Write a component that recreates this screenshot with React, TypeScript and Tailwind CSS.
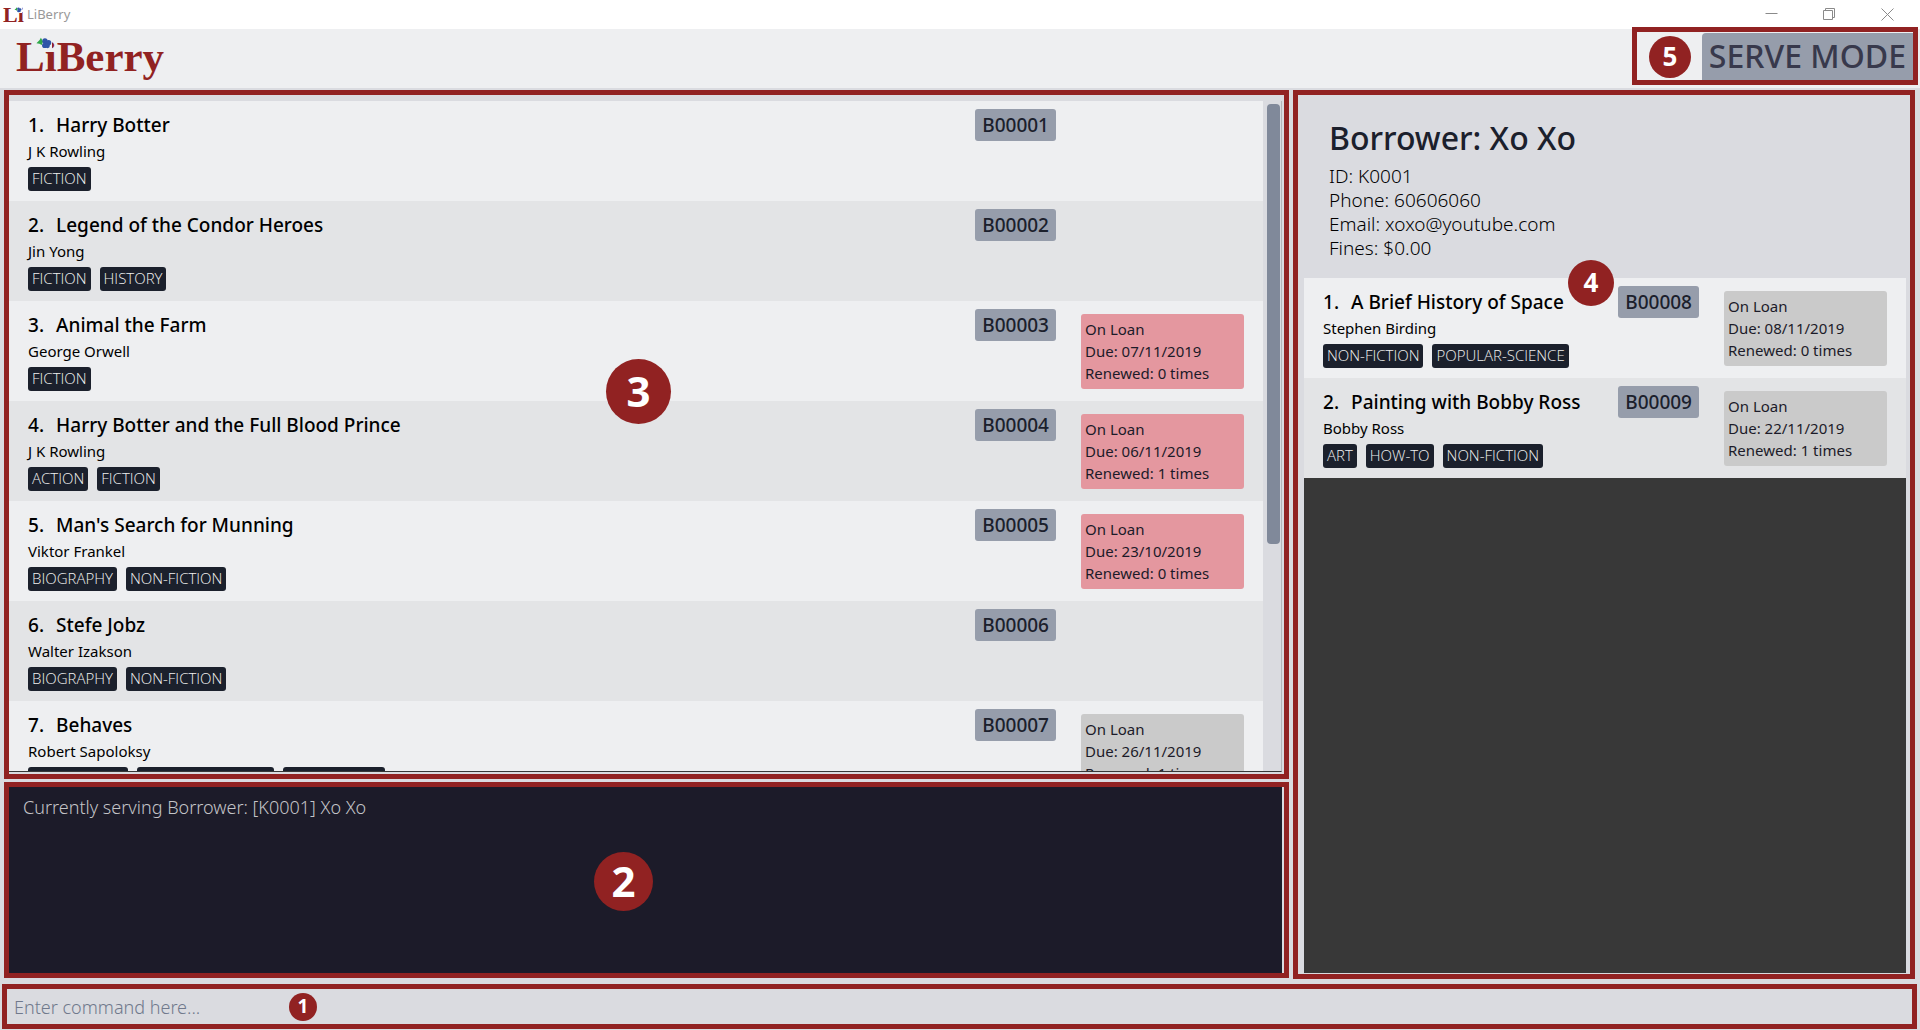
import type { ReactNode } from 'react';

type Loan = { due: string; renewed: number; overdue?: boolean };
type Book = { title: string; author: string; tags: string[]; code: string; loan?: Loan };

const catalogue: Book[] = [
  { title: 'Harry Botter', author: 'J K Rowling', tags: ['FICTION'], code: 'B00001' },
  { title: 'Legend of the Condor Heroes', author: 'Jin Yong', tags: ['FICTION', 'HISTORY'], code: 'B00002' },
  {
    title: 'Animal the Farm',
    author: 'George Orwell',
    tags: ['FICTION'],
    code: 'B00003',
    loan: { due: '07/11/2019', renewed: 0, overdue: true },
  },
  {
    title: 'Harry Botter and the Full Blood Prince',
    author: 'J K Rowling',
    tags: ['ACTION', 'FICTION'],
    code: 'B00004',
    loan: { due: '06/11/2019', renewed: 1, overdue: true },
  },
  {
    title: "Man's Search for Munning",
    author: 'Viktor Frankel',
    tags: ['BIOGRAPHY', 'NON-FICTION'],
    code: 'B00005',
    loan: { due: '23/10/2019', renewed: 0, overdue: true },
  },
  { title: 'Stefe Jobz', author: 'Walter Izakson', tags: ['BIOGRAPHY', 'NON-FICTION'], code: 'B00006' },
  {
    title: 'Behaves',
    author: 'Robert Sapoloksy',
    tags: ['NON-FICTION', 'POPULAR-SCIENCE', 'PSYCHOLOGY'],
    code: 'B00007',
    loan: { due: '26/11/2019', renewed: 1 },
  },
];

const borrowed: Book[] = [
  {
    title: 'A Brief History of Space',
    author: 'Stephen Birding',
    tags: ['NON-FICTION', 'POPULAR-SCIENCE'],
    code: 'B00008',
    loan: { due: '08/11/2019', renewed: 0 },
  },
  {
    title: 'Painting with Bobby Ross',
    author: 'Bobby Ross',
    tags: ['ART', 'HOW-TO', 'NON-FICTION'],
    code: 'B00009',
    loan: { due: '22/11/2019', renewed: 1 },
  },
];

function Marker({ className, children }: { className: string; children: ReactNode }) {
  return (
    <span
      className={`flex shrink-0 items-center justify-center rounded-full bg-[#912222] pb-0.5 leading-none font-bold text-white ${className}`}
    >
      {children}
    </span>
  );
}

function Berry({ className }: { className: string }) {
  return (
    <svg viewBox="0 0 15 12" className={className} aria-hidden="true">
      <path d="M4.6 0.6 3.4 2.8 0.4 5.8 3.2 6.2 5.4 7.4 6.6 4.2Z" fill="#2fa84a" />
      <circle cx="8.4" cy="3.6" r="2.5" fill="#2f55a8" />
      <circle cx="11.8" cy="5.2" r="2.5" fill="#2f55a8" />
      <circle cx="8.2" cy="7.8" r="2.5" fill="#2f55a8" />
      <circle cx="10.8" cy="8.2" r="2.2" fill="#2f55a8" />
    </svg>
  );
}

function LoanStatus({ loan }: { loan: Loan }) {
  return (
    <div
      className={`mt-[13px] h-[75px] rounded-[3px] px-1 pt-1 text-[15px] leading-[22px] text-[#1c1b29] ${
        loan.overdue ? 'bg-[#e4979f]' : 'bg-[#cacaca]'
      }`}
    >
      <p>On Loan</p>
      <p>Due: {loan.due}</p>
      <p>Renewed: {loan.renewed} times</p>
    </div>
  );
}

function BookRow({ book, index }: { book: Book; index: number }) {
  return (
    <li className="flex h-[100px] shrink-0 items-start px-[19px] odd:bg-[#eeeff1] even:bg-[#e3e4e6]">
      <div className="min-w-0 flex-1 pt-3 whitespace-nowrap">
        <h3 className="flex gap-3 text-[19px] leading-6 font-medium text-black">
          <span>{index}.</span>
          <span>{book.title}</span>
        </h3>
        <p className="mt-[3px] text-[15px] leading-[22px] text-black">{book.author}</p>
        <ul className="mt-[5px] flex gap-[9px]">
          {book.tags.map((tag) => (
            <li
              key={tag}
              className="rounded-[3px] bg-[#1b202c] px-1 pb-0.5 font-['Open_Sans',sans-serif] text-[15px] leading-[22px] font-light text-[#f0f0f0]"
            >
              {tag}
            </li>
          ))}
        </ul>
      </div>
      <span className="mt-2 h-8 rounded-[3px] bg-[#969dab] px-[7px] text-[19px] leading-8 font-medium text-[#1b202c]">
        {book.code}
      </span>
      <div className="ml-[25px] w-[163px] shrink-0">{book.loan && <LoanStatus loan={book.loan} />}</div>
    </li>
  );
}

export default function App() {
  return (
    <div className="flex h-screen flex-col overflow-hidden bg-[#dadbe0] font-['Noto_Sans',sans-serif]">
      <div className="flex h-[29px] shrink-0 items-center bg-white">
        <div className="relative ml-[3px] w-6 font-['Liberation_Serif',serif] text-[22px] leading-7 font-bold text-[#912222]">
          Li
          <Berry className="absolute top-1.5 left-[11px] h-[6px] w-[8px] bg-white" />
        </div>
        <h1 className="flex-1 text-[13px] text-[#999999]">LiBerry</h1>
        <div className="mr-1 flex h-full text-[#8a8a8a]">
          <button type="button" aria-label="Minimize" className="flex w-[58px] items-center justify-center">
            <svg width="13" height="13" viewBox="0 0 13 13" stroke="currentColor" fill="none">
              <path d="M0.5 5.5h12" />
            </svg>
          </button>
          <button type="button" aria-label="Restore" className="flex w-[58px] items-center justify-center">
            <svg width="13" height="13" viewBox="0 0 13 13" stroke="currentColor" fill="none">
              <path d="M0.5 2.5h9v9h-9zM2.5 2.5v-2h9v9h-2" />
            </svg>
          </button>
          <button type="button" aria-label="Close" className="flex w-[58px] items-center justify-center">
            <svg width="13" height="13" viewBox="0 0 13 13" stroke="currentColor" fill="none">
              <path d="M0.5 0.5l12 12M12.5 0.5l-12 12" />
            </svg>
          </button>
        </div>
      </div>

      <header className="flex h-[59px] shrink-0 items-start justify-between bg-[#eeeff1] pr-0.5 pl-4">
        <div className="relative font-['Liberation_Serif',serif] text-[43px] leading-[56px] font-bold text-[#912222]">
          LiBerry
          <Berry className="absolute top-2 left-[20px] h-[13px] w-[16px] bg-[#eeeff1]" />
        </div>
        <div className="-mt-0.5 flex h-[58px] items-start border-[5px] border-[#912222] bg-[#eeeff1] pl-3">
          <Marker className="mt-1 size-[42px] text-[26px]">5</Marker>
          <span className="mt-px ml-[11px] h-[47px] rounded-tl-[4px] bg-[#969dab] px-[7px] text-[32px] leading-[46px] font-medium text-[#38394c]">
            SERVE MODE
          </span>
        </div>
      </header>

      <main className="grid min-h-0 flex-1 grid-cols-[1285fr_622fr] gap-1 pt-0.5 pr-[5px] pb-[5px] pl-1">
        <div className="flex min-h-0 min-w-0 flex-col gap-[3px] pb-px">
          <section
            aria-label="Books"
            className="relative flex min-h-0 flex-1 border-[5px] border-[#912222] pt-1.5 pr-0.5 pb-0.5"
          >
            <div className="flex min-w-0 flex-1 border-r border-b border-r-[#b4b5ba] border-b-[#383838]">
              <ul className="flex min-w-0 flex-1 flex-col overflow-hidden">
                {catalogue.map((book, i) => (
                  <BookRow key={book.code} book={book} index={i + 1} />
                ))}
              </ul>
              <div className="w-[18px] shrink-0 pt-[3px] pr-px pl-1">
                <div className="h-[66%] rounded-[4px] bg-[#80899a]" />
              </div>
            </div>
            <Marker className="absolute top-[264px] left-[597px] size-[65px] text-[42px]">3</Marker>
          </section>

          <section
            aria-label="Result"
            className="relative h-[196px] shrink-0 border-[5px] border-[#912222] pr-0.5"
          >
            <p className="h-full bg-[#1c1b29] px-[14px] pt-2 text-[18px] leading-6 font-light text-[#c4c4c8]">
              Currently serving Borrower: [K0001] Xo Xo
            </p>
            <Marker className="absolute top-[65px] left-[585px] size-[59px] text-[42px]">2</Marker>
          </section>
        </div>

        <section
          aria-label="Borrower"
          className="relative flex min-h-0 min-w-0 flex-col border-[5px] border-[#912222] pr-1 pb-px pl-1.5 text-[#1b202c]"
        >
          <div className="px-[25px] pt-[21px] pb-[18px]">
            <h2 className="text-[32px] leading-[44px] font-medium">Borrower: Xo Xo</h2>
            <div className="mt-1 text-[19px] leading-6 font-light text-black">
              <p>ID: K0001</p>
              <p>Phone: 60606060</p>
              <p>Email: xoxo@youtube.com</p>
              <p>Fines: $0.00</p>
            </div>
          </div>
          <ul className="flex min-h-0 flex-1 flex-col overflow-hidden bg-[#383838]">
            {borrowed.map((book, i) => (
              <BookRow key={book.code} book={book} index={i + 1} />
            ))}
          </ul>
          <Marker className="absolute top-[165px] left-[270px] size-[46px] text-[26px]">4</Marker>
        </section>
      </main>

      <div className="relative mr-[3px] mb-px ml-0.5 h-[45px] shrink-0 border-[5px] border-[#912222]">
        <input
          type="text"
          aria-label="Command"
          placeholder="Enter command here..."
          className="size-full bg-transparent px-[7px] pt-px text-[18px] font-light text-[#1b202c] outline-none placeholder:text-[#70798c]"
        />
        <Marker className="absolute top-1 left-[282px] size-7 text-[19px]">1</Marker>
      </div>
    </div>
  );
}
